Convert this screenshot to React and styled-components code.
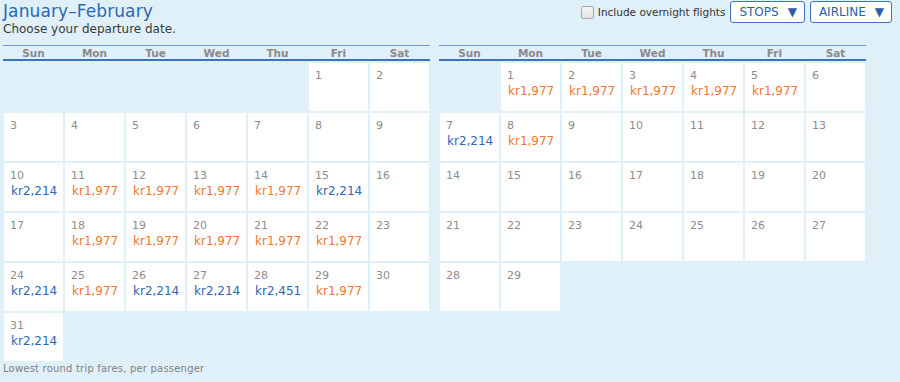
import React from "react";
import styled, { createGlobalStyle } from "styled-components";

const GlobalStyle = createGlobalStyle`
  html, body {
    margin: 0;
    padding: 0;
    background: #e0f0f9;
  }
  body {
    font-family: "DejaVu Sans", Verdana, sans-serif;
  }
`;

const Page = styled.div`
  width: 900px;
  height: 382px;
  box-sizing: border-box;
  padding: 0 0 0 3px;
  background: #e0f0f9;
`;

const TopBar = styled.div`
  display: flex;
  justify-content: space-between;
  align-items: flex-start;
  height: 45px;
`;

const Heading = styled.div`
  padding-top: 1px;
`;

const Title = styled.h1`
  margin: 0;
  font-size: 17px;
  font-weight: normal;
  line-height: 21px;
  color: #2b68b3;
  letter-spacing: 0.1px;
`;

const Subtitle = styled.div`
  font-size: 12px;
  line-height: 15px;
  color: #3a3a3a;
`;

const Controls = styled.div`
  display: flex;
  align-items: center;
  gap: 5px;
  padding: 1px 8px 0 0;
`;

const CheckLabel = styled.label`
  display: flex;
  align-items: center;
  gap: 4px;
  font-size: 10.5px;
  color: #333;
`;

const Box = styled.span`
  display: inline-block;
  width: 11px;
  height: 11px;
  border: 1px solid #a8a8a8;
  border-radius: 2px;
  background: linear-gradient(#f4f4f4, #e2e2e2);
`;

const DropButton = styled.button`
  height: 22px;
  padding: 0 7px 0 8px;
  border: 1px solid #3b73b9;
  border-radius: 3px;
  background: #fff;
  color: #2b5ea6;
  font-family: "DejaVu Sans", Verdana, sans-serif;
  font-size: 12px;
  display: flex;
  align-items: center;
  gap: 9px;
  cursor: pointer;
`;

const Months = styled.div`
  display: flex;
  gap: 9px;
`;

const Month = styled.div`
  width: 427px;
`;

const WeekHead = styled.div`
  display: grid;
  grid-template-columns: repeat(7, 1fr);
  border-top: 1px solid #6b9bd3;
  border-bottom: 2px solid #3a74bd;
  height: 13px;
`;

const DayName = styled.div`
  text-align: center;
  font-size: 10.5px;
  font-weight: bold;
  line-height: 14px;
  color: #8a8a8a;
`;

const Grid = styled.div`
  display: grid;
  grid-template-columns: repeat(7, 59px);
  grid-auto-rows: 48px;
  gap: 2px;
  padding: 2px 1px 0;
`;

const Cell = styled.div`
  background: ${(p) => (p.$empty ? "transparent" : "#fff")};
  padding: 6px 0 0 6px;
  box-sizing: border-box;
`;

const DayNum = styled.div`
  font-size: 11px;
  line-height: 13px;
  color: #8c8c8c;
`;

const Price = styled.div`
  margin-top: 2px;
  padding-left: 1px;
  font-size: 12px;
  line-height: 15px;
  color: ${(p) => (p.$cheap ? "#f0782e" : "#2c67b8")};
`;

const Note = styled.div`
  margin-top: 2px;
  font-size: 10px;
  color: #808080;
  letter-spacing: 0.2px;
`;

const days = ["Sun", "Mon", "Tue", "Wed", "Thu", "Fri", "Sat"];

const O = "kr1,977";

const jan = {
  offset: 5,
  count: 31,
  prices: {
    10: "kr2,214",
    11: O,
    12: O,
    13: O,
    14: O,
    15: "kr2,214",
    18: O,
    19: O,
    20: O,
    21: O,
    22: O,
    24: "kr2,214",
    25: O,
    26: "kr2,214",
    27: "kr2,214",
    28: "kr2,451",
    29: O,
    31: "kr2,214",
  },
};

const feb = {
  offset: 1,
  count: 29,
  prices: { 1: O, 2: O, 3: O, 4: O, 5: O, 7: "kr2,214", 8: O },
};

const Calendar = ({ month }) => {
  const cells = [];
  for (let i = 0; i < month.offset; i++) cells.push(<Cell key={"e" + i} $empty />);
  for (let d = 1; d <= month.count; d++) {
    const price = month.prices[d];
    cells.push(
      <Cell key={d}>
        <DayNum>{d}</DayNum>
        {price && <Price $cheap={price === O}>{price}</Price>}
      </Cell>
    );
  }
  return (
    <Month>
      <WeekHead>
        {days.map((d) => (
          <DayName key={d}>{d}</DayName>
        ))}
      </WeekHead>
      <Grid>{cells}</Grid>
    </Month>
  );
};

export default function App() {
  return (
    <Page>
      <GlobalStyle />
      <TopBar>
        <Heading>
          <Title>January–February</Title>
          <Subtitle>Choose your departure date.</Subtitle>
        </Heading>
        <Controls>
          <CheckLabel>
            <Box />
            Include overnight flights
          </CheckLabel>
          <DropButton>
            STOPS <span>▼</span>
          </DropButton>
          <DropButton>
            AIRLINE <span>▼</span>
          </DropButton>
        </Controls>
      </TopBar>
      <Months>
        <Calendar month={jan} />
        <Calendar month={feb} />
      </Months>
      <Note>Lowest round trip fares, per passenger</Note>
    </Page>
  );
}
